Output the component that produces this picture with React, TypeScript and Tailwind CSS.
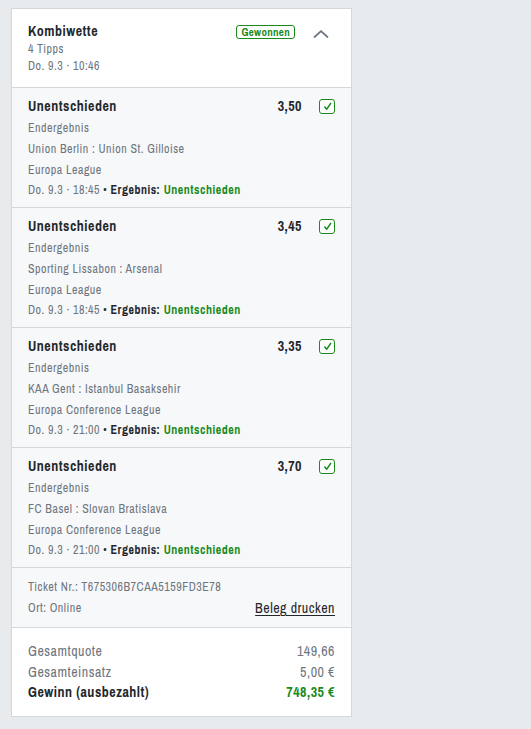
const tips = [
  { odds: "3,50", match: "Union Berlin : Union St. Gilloise", league: "Europa League", time: "18:45" },
  { odds: "3,45", match: "Sporting Lissabon : Arsenal", league: "Europa League", time: "18:45" },
  { odds: "3,35", match: "KAA Gent : Istanbul Basaksehir", league: "Europa Conference League", time: "21:00" },
  { odds: "3,70", match: "FC Basel : Slovan Bratislava", league: "Europa Conference League", time: "21:00" },
];

function Check() {
  return (
    <span className="flex h-[15px] w-[16px] items-center justify-center rounded-[3px] border border-[#1a8a1a] bg-white">
      <svg width="9" height="9" viewBox="0 0 10 10">
        <path d="M2 5.5 L4.2 8 L8.5 1.5" fill="none" stroke="#1a8a1a" strokeWidth="1.7" strokeLinecap="round" strokeLinejoin="round" />
      </svg>
    </span>
  );
}

export default function App() {
  return (
    <main className="min-h-[729px] bg-[#e8ebee] pt-2 pl-[11px] font-['Archivo_Narrow',sans-serif] tracking-[0.5px] text-[#23272b]">
      <div className="w-[341px] border border-[#d3d8dd] bg-white">
        <section className="flex items-start px-4 pt-[13px] pb-[12px]">
          <div className="flex-1">
            <h1 className="text-[14px] font-bold leading-[18px]">Kombiwette</h1>
            <p className="mt-[1px] text-[12px] leading-[17px] text-[#6e757d]">4 Tipps</p>
            <p className="text-[12px] leading-[17px] text-[#6e757d]">Do. 9.3 · 10:46</p>
          </div>
          <span className="mt-[3px] rounded-[3px] border border-[#1a8a1a] px-[4px] text-[11px] font-bold leading-[12px] tracking-[0.3px] text-[#1a8a1a]">
            Gewonnen
          </span>
          <svg className="mt-[8px] ml-[18px] mr-[6px]" width="16" height="8" viewBox="0 0 16 8">
            <path d="M1 7.5 L8 1.2 L15 7.5" fill="none" stroke="#6b7480" strokeWidth="1.8" />
          </svg>
        </section>

        {tips.map((t) => (
          <section key={t.match} className="border-t border-[#d3d8dd] bg-[#f7f8fa] px-4 pt-[8px] pb-[7px]">
            <div className="flex items-center">
              <h2 className="flex-1 text-[14px] font-bold leading-[20px]">Unentschieden</h2>
              <span className="text-[14px] font-bold leading-[20px]">{t.odds}</span>
              <span className="ml-[17px]">
                <Check />
              </span>
            </div>
            <div className="text-[12px] leading-[21px] text-[#6e757d]">
              <p className="mt-[2px]">Endergebnis</p>
              <p>{t.match}</p>
              <p>{t.league}</p>
              <p className="leading-[19px]">
                Do. 9.3 · {t.time} <span className="text-[#23272b]">•</span>{" "}
                <span className="font-bold text-[#23272b]">Ergebnis:</span>{" "}
                <span className="font-bold text-[#1a8a1a]">Unentschieden</span>
              </p>
            </div>
          </section>
        ))}

        <section className="border-t border-[#d3d8dd] bg-[#f7f8fa] px-4 pt-[9px] pb-[8px] text-[12px] text-[#6e757d]">
          <p className="leading-[21px]">Ticket Nr.: T675306B7CAA5159FD3E78</p>
          <div className="flex items-center leading-[21px]">
            <p className="flex-1">Ort: Online</p>
            <a className="text-[14px] text-[#23272b] underline underline-offset-2">Beleg drucken</a>
          </div>
        </section>

        <section className="border-t border-[#d3d8dd] px-4 pt-[13px] pb-[13px] text-[14px] leading-[20.5px]">
          <div className="flex justify-between text-[#6e757d]">
            <span>Gesamtquote</span>
            <span>149,66</span>
          </div>
          <div className="flex justify-between text-[#6e757d]">
            <span>Gesamteinsatz</span>
            <span>5,00 €</span>
          </div>
          <div className="flex justify-between font-bold">
            <span>Gewinn (ausbezahlt)</span>
            <span className="text-[#1a8a1a]">748,35 €</span>
          </div>
        </section>
      </div>
    </main>
  );
}
